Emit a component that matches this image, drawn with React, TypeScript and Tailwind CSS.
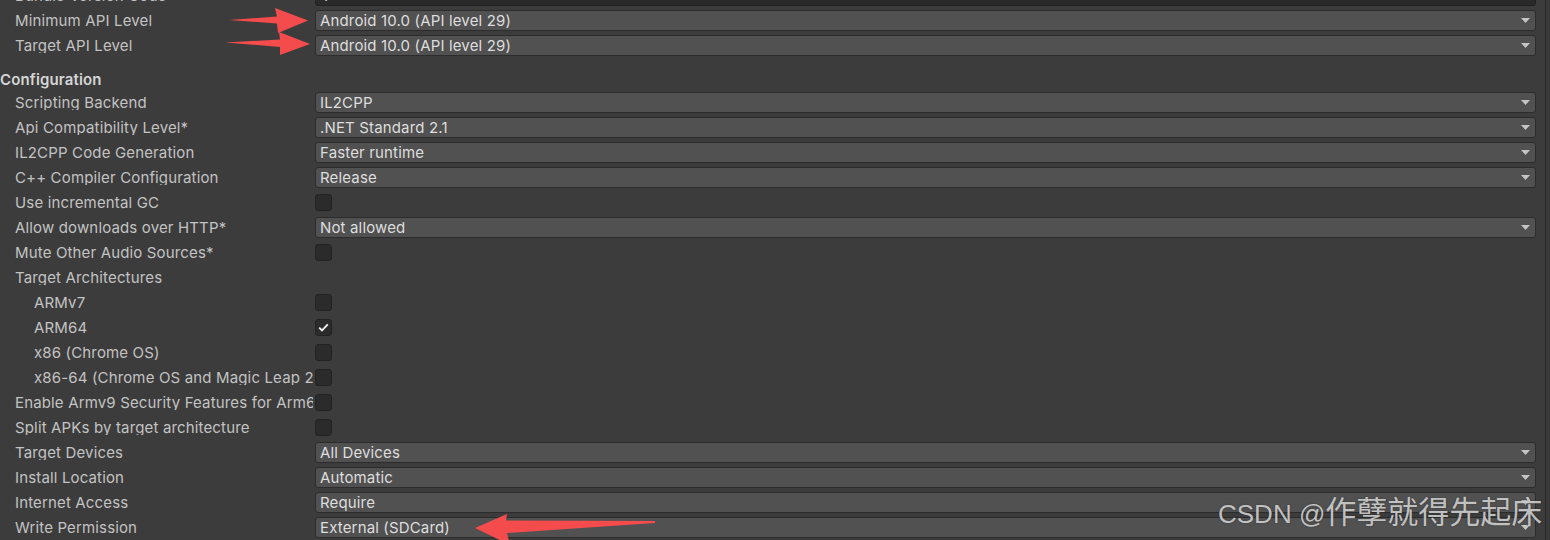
import React from 'react';

type Kind = 'dropdown' | 'check' | 'none' | 'text';

type Row = {
  label: string;
  kind: Kind;
  value?: string;
  checked?: boolean;
  indent?: boolean;
};

const topRows: Row[] = [
  { label: 'Bundle Version Code', kind: 'text', value: '1' },
  { label: 'Minimum API Level', kind: 'dropdown', value: 'Android 10.0 (API level 29)' },
  { label: 'Target API Level', kind: 'dropdown', value: 'Android 10.0 (API level 29)' },
];

const configRows: Row[] = [
  { label: 'Scripting Backend', kind: 'dropdown', value: 'IL2CPP' },
  { label: 'Api Compatibility Level*', kind: 'dropdown', value: '.NET Standard 2.1' },
  { label: 'IL2CPP Code Generation', kind: 'dropdown', value: 'Faster runtime' },
  { label: 'C++ Compiler Configuration', kind: 'dropdown', value: 'Release' },
  { label: 'Use incremental GC', kind: 'check' },
  { label: 'Allow downloads over HTTP*', kind: 'dropdown', value: 'Not allowed' },
  { label: 'Mute Other Audio Sources*', kind: 'check' },
  { label: 'Target Architectures', kind: 'none' },
  { label: 'ARMv7', kind: 'check', indent: true },
  { label: 'ARM64', kind: 'check', indent: true, checked: true },
  { label: 'x86 (Chrome OS)', kind: 'check', indent: true },
  { label: 'x86-64 (Chrome OS and Magic Leap 2)', kind: 'check', indent: true },
  { label: 'Enable Armv9 Security Features for Arm64', kind: 'check' },
  { label: 'Split APKs by target architecture', kind: 'check' },
  { label: 'Target Devices', kind: 'dropdown', value: 'All Devices' },
  { label: 'Install Location', kind: 'dropdown', value: 'Automatic' },
  { label: 'Internet Access', kind: 'dropdown', value: 'Require' },
  { label: 'Write Permission', kind: 'dropdown', value: 'External (SDCard)' },
];

function Control({ row }: { row: Row }) {
  if (row.kind === 'dropdown') {
    return (
      <div className="flex h-[21px] flex-1 items-center justify-between rounded-[3px] border border-[#2c2c2c] bg-[#515151] pl-[4px] pr-[5px] text-[#dedede]">
        <span className="leading-none">{row.value}</span>
        <svg width="9" height="5" viewBox="0 0 9 5">
          <polygon points="0,0 9,0 4.5,5" fill="#c4c4c4" />
        </svg>
      </div>
    );
  }
  if (row.kind === 'text') {
    return (
      <div className="flex h-[21px] flex-1 items-center rounded-[3px] border border-[#212121] bg-[#2a2a2a] pl-[6px] text-[#dedede]">
        <span className="leading-none">{row.value}</span>
      </div>
    );
  }
  if (row.kind === 'check') {
    return (
      <div className="flex h-[17px] w-[17px] items-center justify-center rounded-[3px] border border-[#232323] bg-[#2b2b2b]">
        {row.checked && (
          <svg width="11" height="9" viewBox="0 0 11 9">
            <polyline points="1.2,4.6 4,7.4 9.8,1.4" fill="none" stroke="#f0f0f0" strokeWidth="1.8" />
          </svg>
        )}
      </div>
    );
  }
  return null;
}

function SettingRow({ row }: { row: Row }) {
  return (
    <div className="flex h-[25px] items-center">
      <div
        className={`w-[313px] shrink-0 overflow-hidden whitespace-nowrap leading-none text-[#c3c3c3] ${
          row.indent ? 'pl-[34px]' : 'pl-[15px]'
        }`}
      >
        {row.label}
      </div>
      <div className="ml-[2px] flex flex-1 items-center">
        <Control row={row} />
      </div>
    </div>
  );
}

export default function App() {
  return (
    <div
      className="relative flex h-[540px] w-[1550px] overflow-hidden bg-[#3c3c3c] text-[15px] tracking-[0.15px]"
      style={{ fontFamily: 'Inter, "Noto Sans", sans-serif' }}
    >
      <div className="flex-1 pr-[9px]">
        <div className="-mt-[17px]">
          {topRows.map((r) => (
            <SettingRow key={r.label} row={r} />
          ))}
        </div>
        <div className="mt-[10px] flex h-[22px] items-center text-[15px] font-semibold leading-none text-[#d6d6d6]">
          Configuration
        </div>
        {configRows.map((r) => (
          <SettingRow key={r.label} row={r} />
        ))}
      </div>
      <div className="w-[5px] border-l border-[#2a2a2a] bg-[#3a3a3a]" />

      <svg
        className="pointer-events-none absolute left-0 top-0"
        width="1550"
        height="540"
        viewBox="0 0 1550 540"
      >
        <polygon points="229,20 277,16.5 275,8 308,20.5 278,33 277,23.5" fill="#f44c4c" />
        <polygon points="225,42.5 280,39.5 279,32 310,44 280,55 280,47" fill="#f44c4c" />
        <polygon points="475,528 507,514 506,520.5 655,521 655,523 507,533 510,545" fill="#f44c4c" />
      </svg>

      <div
        className="pointer-events-none absolute left-[1218px] top-[487px] flex items-baseline whitespace-nowrap tracking-normal text-[#dadada]/85"
        style={{ textShadow: '0 0 2px rgba(40,40,40,0.6)' }}
      >
        <span className="text-[26px]" style={{ fontFamily: '"Liberation Sans", sans-serif' }}>
          CSDN @
        </span>
        <span className="text-[31px]" style={{ fontFamily: '"Noto Sans CJK SC", sans-serif' }}>
          作孽就得先起床
        </span>
      </div>
    </div>
  );
}
